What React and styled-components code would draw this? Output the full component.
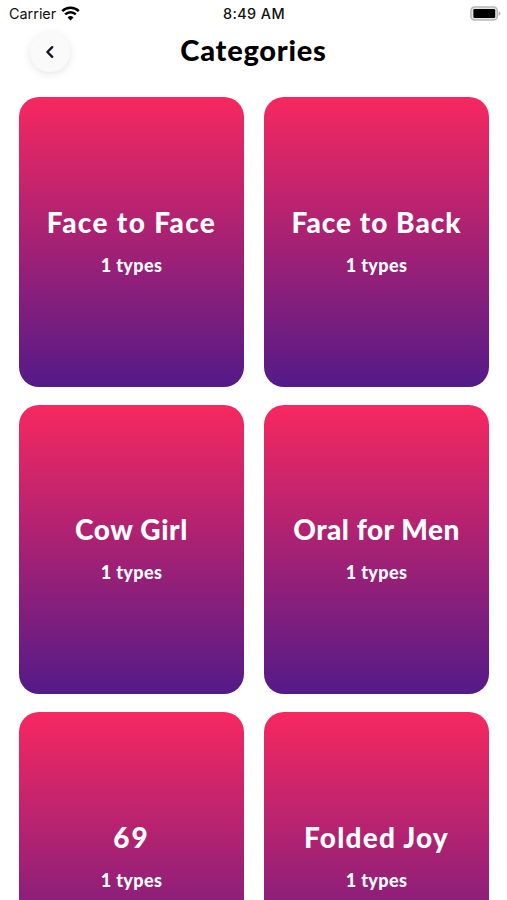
import React from "react"
import styled, { createGlobalStyle } from "styled-components"

const categories = [
  { name: "Face to Face", types: 1, tracking: 1.35 },
  { name: "Face to Back", types: 1, tracking: 1 },
  { name: "Cow Girl", types: 1, tracking: 0.6 },
  { name: "Oral for Men", types: 1, tracking: 0.5 },
  { name: "69", types: 1, tracking: 2 },
  { name: "Folded Joy", types: 1, tracking: 1.2 },
]

function WifiIcon() {
  return (
    <svg width="19" height="15" viewBox="0 0 19 15" fill="none">
      <path d="M1.2 5.2a11.8 11.8 0 0 1 16.6 0" stroke="#000" strokeWidth="2.5" />
      <path d="M4.2 8.4a7.5 7.5 0 0 1 10.6 0" stroke="#000" strokeWidth="2.4" />
      <path d="M9.5 14.4 6.5 11.4a4.3 4.3 0 0 1 6 0z" fill="#000" />
    </svg>
  )
}

function BatteryIcon() {
  return (
    <svg width="31" height="15" viewBox="0 0 31 15">
      <rect x="0.9" y="0.9" width="26.4" height="13.2" rx="3.8" fill="#e4e4e4" stroke="#b8b8b8" strokeWidth="1.5" />
      <rect x="3.4" y="3" width="21.8" height="9" rx="1.2" fill="#000" />
      <path d="M28.6 5.2c2.5.8 2.5 3.8 0 4.6z" fill="#b5b5b5" />
    </svg>
  )
}

function App() {
  return (
    <Screen>
      <GlobalStyle />
      <StatusBar>
        <Carrier>
          Carrier
          <WifiIcon />
        </Carrier>
        <Time>8:49 AM</Time>
        <Battery>
          <BatteryIcon />
        </Battery>
      </StatusBar>
      <Header>
        <BackButton aria-label="Back">
          <svg width="10" height="14" viewBox="0 0 10 14" fill="none">
            <path d="M7.2 2.2 2.4 7l4.8 4.8" stroke="#17152b" strokeWidth="2.4" strokeLinecap="round" strokeLinejoin="round" />
          </svg>
        </BackButton>
        <Title>Categories</Title>
      </Header>
      <Grid>
        {categories.map(category => (
          <Card key={category.name}>
            <CardTitle $tracking={category.tracking}>{category.name}</CardTitle>
            <CardText>{category.types} types</CardText>
          </Card>
        ))}
      </Grid>
    </Screen>
  )
}

export default App

const GlobalStyle = createGlobalStyle`
  * {
    box-sizing: border-box;
  }
  body {
    margin: 0;
    background: #fff;
    overflow: hidden;
  }
`
const Screen = styled.div`
  height: 900px;
  overflow: hidden;
  background: #fff;
  font-family: Lato, sans-serif;
`
const StatusBar = styled.div`
  display: grid;
  grid-template-columns: 1fr auto 1fr;
  align-items: center;
  height: 27px;
  padding: 0 6px 0 9px;
  font-family: Inter, sans-serif;
  font-size: 14.4px;
  color: #111;
`
const Carrier = styled.div`
  display: flex;
  align-items: center;
  gap: 5px;
`
const Time = styled.div`
  font-weight: 500;
  letter-spacing: 0.4px;
  margin-right: 2px;
`
const Battery = styled.div`
  display: flex;
  justify-content: flex-end;
`
const Header = styled.header`
  display: grid;
  grid-template-columns: 40px 1fr 40px;
  align-items: center;
  height: 70px;
  padding: 0 30px 24px;
`
const BackButton = styled.button`
  display: flex;
  align-items: center;
  justify-content: center;
  width: 40px;
  height: 40px;
  margin-top: 4px;
  padding: 0;
  border: 0;
  border-radius: 50%;
  background: #fafafa;
  box-shadow: 0 2px 8px rgba(0, 0, 0, 0.1);
`
const Title = styled.h1`
  margin: 0 0 1px;
  font-size: 29px;
  font-weight: 900;
  line-height: 36px;
  letter-spacing: 0.75px;
  text-align: center;
  color: #000;
`
const Grid = styled.main`
  display: grid;
  grid-template-columns: 1fr 1fr;
  grid-auto-rows: 289.6px;
  gap: 18px 20px;
  padding: 0 18px 0 19px;
`
const Card = styled.section`
  display: flex;
  flex-direction: column;
  align-items: center;
  justify-content: center;
  padding-bottom: 3px;
  border-radius: 20px;
  background: linear-gradient(#f72860, #541a88);
  color: #fff;
`
const CardTitle = styled.h2`
  margin: 0;
  font-size: 28px;
  font-weight: 900;
  line-height: 36px;
  letter-spacing: ${props => props.$tracking}px;
`
const CardText = styled.p`
  margin: 13px 0 0;
  font-size: 18px;
  font-weight: 900;
  line-height: 24px;
  letter-spacing: 0.35px;
`
